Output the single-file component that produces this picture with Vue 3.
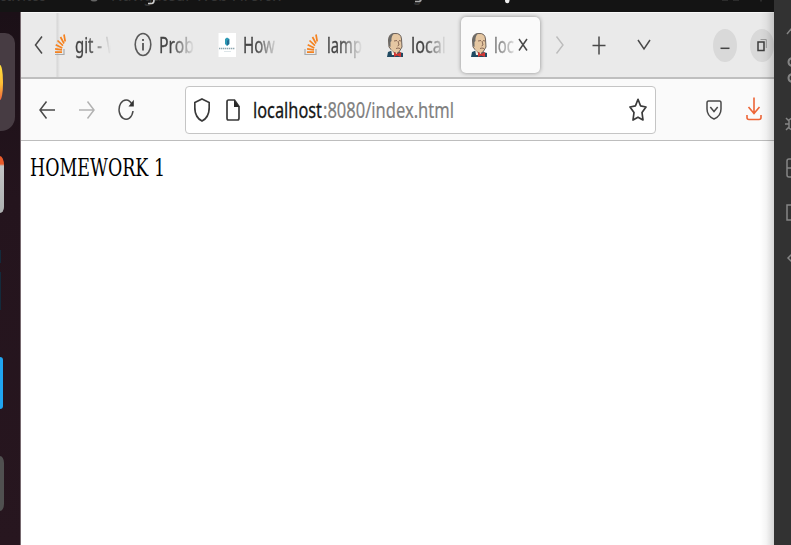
<script setup>
const tabs = [
  { icon: 'stack', title: 'git - W', width: 45, view: 36 },
  { icon: 'info', title: 'Prob', width: 35, view: 36 },
  { icon: 'page', title: 'How', width: 32, view: 36 },
  { icon: 'stack', title: 'lamp', width: 35, view: 36 },
  { icon: 'butler', title: 'local', width: 35, view: 36 },
  { icon: 'butler', title: 'loc', width: 20, view: 21, active: true },
]
</script>

<template>
  <div class="desktop">
    <header class="topbar">
      <svg width="774" height="12" viewBox="0 0 774 12">
        <g fill="#343434" font-size="20">
          <text x="-10" y="0.8" textLength="56" lengthAdjust="spacingAndGlyphs">Activités</text>
          <ellipse cx="94" cy="-2" rx="4" ry="3.600" fill="#666" />
          <text x="111" y="0.8" textLength="170" lengthAdjust="spacingAndGlyphs">Navigateur Web Firefox</text>
          <text x="395" y="-0.5" textLength="27" lengthAdjust="spacingAndGlyphs">aug</text>
        </g>
        <path d="M148 3.500H152Q154 3 154 0" stroke="#ccc" stroke-width="1.600" fill="none" />
        <path d="M415 1.500H419Q421 1 421 0" stroke="#aaa" stroke-width="1.600" fill="none" />
        <ellipse cx="507.300" cy="0" rx="2.300" ry="3.200" fill="#eee" />
        <path d="M722 0h6M733 0h6M761 0v1.500" stroke="#444" />
      </svg>
    </header>

    <aside class="dock">
      <div class="tile firefox"><span class="fox"></span></div>
      <div class="tile files"></div>
      <div class="tile dark small"></div>
      <div class="tile dark"></div>
      <div class="tile code"></div>
      <div class="tile grey"></div>
    </aside>

    <main class="browser">
      <div class="tabbar">
        <div class="scroll-left">
          <svg width="10" height="20" viewBox="0 0 10 20"><path d="M8 1.500L1.500 10L8 18.500" class="line" /></svg>
        </div>
        <div class="tabs">
          <div v-for="(tab, i) in tabs" :key="i" class="tab" :class="{ active: tab.active }">
            <svg v-if="tab.icon === 'stack'" class="fav" viewBox="0 0 16 24" width="16" height="24">
              <path d="M2 16V21.500H13V16" fill="none" stroke="#aaa" stroke-width="1.200" />
              <path d="M4 19.200H11M4.100 15.900L11 16.900M4.700 11.800L11.300 14.900M6.500 7.500L12 12.700M9.500 4L13 10.500M13 1.500L14.200 8.500" fill="none" stroke="#f5821f" stroke-width="1.700" />
            </svg>
            <svg v-else-if="tab.icon === 'info'" class="fav" viewBox="0 0 16 24" width="16" height="24">
              <ellipse cx="8" cy="11.500" rx="7.800" ry="11" fill="none" stroke="#5a5a5a" stroke-width="1.600" />
              <path d="M8 10V17.500M8 6V8" stroke="#555" stroke-width="1.800" />
            </svg>
            <svg v-else-if="tab.icon === 'page'" class="fav" viewBox="0 0 16 24" width="16" height="24">
              <path d="M-.5 0H17V24H-.5Z" fill="#fff" />
              <path d="M6 6L8 4.500L10.500 6V11L8 13L6 11Z" fill="#2c9ab5" />
              <path d="M8 8L10 6V11L8 12.500Z" fill="#276b91" />
              <path d="M0 15.500H16" stroke="#8fa7b0" stroke-width="1.500" stroke-dasharray="1.400 .6" />
              <path d="M5 18.500H12" stroke="#dde5e8" />
            </svg>
            <svg v-else class="fav" viewBox="0 0 16 24" width="16" height="24">
              <path d="M0 24L1 19L6 17L12 19L16 20V24Z" fill="#204a62" />
              <path d="M2 14L1.500 7Q2 0 8 .5Q14 0 14.500 6L15 14L12 19Q10 22 6 19Z" fill="#e5c7a2" stroke="#4c423d" stroke-width=".8" />
              <path d="M2 13L1.500 7Q2 1 7 .5Q4 3 4.500 8L3.500 9V14Z" fill="#6b6a68" />
              <path d="M7 8L10 7.500M12 7.500L14 8M11 8L12 12L10.500 13M9 15.500L11 15L13 15.500" stroke="#80604f" stroke-width=".9" fill="none" />
              <path d="M4 16L7 20L10 20V22H5Z" fill="#f4eee3" />
              <path d="M7 19L10 21L14 19V24L10 22.500L7 24Z" fill="#d33833" />
            </svg>
            <svg class="title" :width="tab.view" height="30">
              <text x="0" y="23" :textLength="tab.width" lengthAdjust="spacingAndGlyphs">{{ tab.title }}</text>
            </svg>
            <svg v-if="tab.active" class="close" width="10" height="14" viewBox="0 0 10 14"><path d="M1 1L9 12.500M9 1L1 12.500" class="line" /></svg>
          </div>
        </div>
        <div class="tab-actions">
          <svg width="10" height="20" viewBox="0 0 10 20"><path d="M1.500 1.500L8 10L1.500 18.500" fill="none" stroke="#bcbcbc" stroke-width="1.400" /></svg>
          <svg class="plus" width="14" height="20" viewBox="0 0 14 20"><path d="M.5 10.500H13.500M7 1.500V19.500" class="line" /></svg>
          <svg width="14" height="12" viewBox="0 0 14 12"><path d="M1 1L7 10L13 1" class="line" /></svg>
        </div>
        <div class="window-buttons">
          <span class="round"><svg width="10" height="12" viewBox="0 0 10 12"><path d="M.5 9.300H9.500" stroke="#444" stroke-width="1.500" /></svg></span>
          <span class="round"><svg width="10" height="14" viewBox="0 0 10 14"><path d="M3.500 1.500H9.300V10" fill="none" stroke="#999" /><path d="M1 4H7V12.500H1Z" fill="none" stroke="#3d3d3d" stroke-width="1.500" /></svg></span>
        </div>
      </div>

      <nav class="toolbar">
        <div class="nav-buttons">
          <svg width="16" height="20" viewBox="0 0 16 20"><path d="M16 10H1M7.500 1.500L1 10L7.500 18.500" class="line" /></svg>
          <svg width="16" height="20" viewBox="0 0 16 20"><path d="M0 10H15M8.500 1.500L15 10L8.500 18.500" fill="none" stroke="#b2b2b2" stroke-width="1.500" /></svg>
          <svg class="reload" width="16" height="22" viewBox="0 0 16 22"><path d="M13.800 5A7 9.700 0 1 0 15 12" class="line" /><path d="M15.800 .7V7.500H10.500Z" fill="#343434" /></svg>
        </div>
        <div class="address">
          <svg width="16" height="24" viewBox="0 0 16 24"><path d="M8 1L15.200 4.500V9.500C15.200 16 12 21 8 23C4 21 .8 16 .8 9.500V4.500Z" class="line heavy" /></svg>
          <svg class="doc" width="14" height="22" viewBox="0 0 14 22"><path d="M2.500 1H8.500L13 7.500V19Q13 21 11.500 21H2.500Q1 21 1 19V3Q1 1 2.500 1Z" class="line heavy" /><path d="M8 1L13.500 8H8Z" fill="#292929" /></svg>
          <svg class="url" width="202" height="32">
            <text x="0" y="24" textLength="69" lengthAdjust="spacingAndGlyphs" class="host">localhost</text>
            <text x="70" y="24" textLength="131" lengthAdjust="spacingAndGlyphs" class="path">:8080/index.html</text>
          </svg>
          <svg width="18" height="24" viewBox="0 0 18 24"><path d="M9 1.300L11.500 7.800L17 9L13 14.500L14 22L9 19.200L4 22L5 14.500L1 9L6.500 7.800Z" class="line heavy" stroke-linejoin="round" /></svg>
        </div>
        <div class="tools">
          <svg width="16" height="20" viewBox="0 0 16 20"><path d="M2.500 1H13.500Q15 1 15 3V9Q15 16 8 19Q1 16 1 9V3Q1 1 2.500 1Z" class="line" /><path d="M4.300 7L8 11.500L11.700 7" class="line" /></svg>
          <svg class="download" width="16" height="24" viewBox="0 0 16 24"><g fill="none" stroke="#ed6537" stroke-width="1.600"><path d="M8 .5V16M2.500 10L8 16.500L13.500 10" /><path d="M1 18V20.500Q1 22.500 3 22.500H13Q15 22.500 15 20.500V18" /></g></svg>
        </div>
      </nav>

      <section class="content">
        <svg width="140" height="32">
          <text x="0" y="26.300" textLength="135" lengthAdjust="spacingAndGlyphs">HOMEWORK 1</text>
        </svg>
      </section>
    </main>

    <aside class="rail">
      <svg width="17" height="300" viewBox="0 0 17 300" fill="none" stroke="#858585" stroke-width="1.500">
        <path d="M13 34L18 28" />
        <path d="M18 58Q14.500 59 14.500 62Q14.500 65 18 66M18 74Q14.500 75 14.500 78Q14.500 81 18 82" stroke-width="2" />
        <path d="M18 118L15 120V128L18 130M11 124H15M12 118L15 121M12 130L15 127" />
        <path d="M18 159H15Q13 159 13 161V175Q13 177 15 177H18M13 168H18" />
        <path d="M18 205H13V220H18" />
        <path d="M18 254L14 258L18 262" />
      </svg>
    </aside>
  </div>
</template>

<style>
body {
  background: #24141d;
}
</style>

<style scoped>
.desktop {
  display: grid;
  grid-template: 12px 533px / 21px 753px 17px;
  grid-template-areas: "top top rail" "dock main rail";
  width: 791px;
  height: 545px;
  overflow: hidden;
  font-family: "Noto Sans", "Open Sans", sans-serif;
}
svg {
  display: block;
  flex: none;
}
.line {
  fill: none;
  stroke: #494949;
  stroke-width: 1.5;
}
.heavy {
  stroke: #3a3a3a;
  stroke-width: 1.7;
}
.topbar {
  grid-area: top;
  background: #141414;
}
.dock {
  grid-area: dock;
  display: flex;
  flex-direction: column;
  align-items: flex-start;
  padding-top: 21px;
  box-sizing: border-box;
  background: linear-gradient(#1b1017, #24141d 35%, #27161f);
  border-right: 1px solid #76696f;
  overflow: hidden;
}
.tile {
  flex: none;
}
.firefox {
  display: flex;
  align-items: center;
  width: 15px;
  height: 98px;
  border-radius: 0 10px 14px 0;
  background: #473c43;
}
.fox {
  width: 3px;
  height: 35px;
  border-radius: 0 3px 3px 0 / 0 17px 17px 0;
  background: linear-gradient(#ffdf3d, #ffbd35 55%, #f0653d);
}
.files {
  width: 4px;
  height: 57px;
  margin-top: 25px;
  border-radius: 0 4px 4px 0 / 0 9px 6px 0;
  background: linear-gradient(#e95b2b 8px, #c3c5c5 10px, #aeb1b2);
}
.dark {
  width: 1px;
  height: 38px;
  margin-top: 9px;
  background: #132a3b;
}
.dark.small {
  height: 13px;
  margin-top: 37px;
}
.code {
  width: 3px;
  height: 52px;
  margin-top: 47px;
  border-radius: 0 3px 3px 0;
  background: #20a5f1;
}
.grey {
  width: 4px;
  height: 55px;
  margin-top: 47px;
  border-radius: 0 4px 4px 0 / 0 7px 7px 0;
  background: #505050;
}
.browser {
  grid-area: main;
  position: relative;
  display: flex;
  flex-direction: column;
  background: #fff;
  overflow: hidden;
}
.browser::after {
  content: "";
  position: absolute;
  inset: 0 0 0 auto;
  width: 14px;
  background: linear-gradient(90deg, transparent, rgba(0, 0, 0, 0.04) 45%, rgba(0, 0, 0, 0.16));
}
.tabbar {
  display: flex;
  align-items: center;
  height: 67px;
  box-sizing: border-box;
  border-top: 1px solid #f8f8f8;
  border-bottom: 2px solid #bfbfbf;
  background: #eaeaea;
}
.scroll-left {
  display: flex;
  justify-content: center;
  width: 35px;
}
.tabs {
  display: flex;
  align-items: center;
  width: 490px;
  height: 64px;
  margin-left: -1px;
  padding-right: 1px;
  box-sizing: content-box;
  overflow: hidden;
  background: linear-gradient(90deg, #eaeaea 1px, #d6d6d6 2px, #eaeaea 5px);
}
.tab {
  display: flex;
  align-items: center;
  flex: none;
  width: 84px;
  height: 56px;
  padding-left: 10px;
  box-sizing: border-box;
}
.tab:first-child {
  margin-left: -14px;
}
.tab.active {
  width: 79px;
  border-radius: 5px;
  background: #fafafa;
  box-shadow: 0 0 4px rgba(0, 0, 0, 0.4);
}
.fav {
  overflow: visible;
}
.title {
  margin-left: 8px;
  overflow: hidden;
  font-size: 21.5px;
  fill: #444;
  stroke: #444;
  stroke-width: 0.3px;
  mask-image: linear-gradient(90deg, #000 35%, transparent);
}
.active .title {
  margin-left: 7px;
  mask-image: linear-gradient(90deg, rgba(0, 0, 0, 0.75), rgba(0, 0, 0, 0.15));
}
.close {
  margin-left: 3px;
}
.tab-actions {
  display: flex;
  align-items: center;
  gap: 37px;
  margin-left: 9px;
}
.plus {
  margin: 0 -7px 0 -10px;
}
.tab-actions svg:last-child {
  margin-left: 1px;
}
.window-buttons {
  display: flex;
  gap: 13px;
  margin-left: auto;
}
.round {
  display: flex;
  align-items: center;
  justify-content: center;
  width: 24px;
  height: 33px;
  border-radius: 50%;
  background: #d9d9d9;
}
.toolbar {
  display: flex;
  align-items: center;
  height: 62px;
  box-sizing: border-box;
  padding: 0 12px 0 18px;
  border-bottom: 1px solid #bdbdbd;
  background: #fafafa;
}
.nav-buttons {
  display: flex;
  align-items: center;
  gap: 24px;
  width: 146px;
}
.reload {
  margin-left: -1px;
}
.address {
  display: flex;
  align-items: center;
  width: 471px;
  height: 48px;
  box-sizing: border-box;
  padding: 0 8px;
  border: 1px solid #c5c5c5;
  border-radius: 4px;
  background: #fff;
}
.doc {
  margin-left: 16px;
}
.url {
  margin-left: 13px;
  margin-right: auto;
  font-size: 22px;
}
.host {
  fill: #161616;
  stroke: #161616;
  stroke-width: 0.3px;
}
.path {
  fill: #808080;
  stroke: #808080;
  stroke-width: 0.2px;
}
.tools {
  display: flex;
  align-items: center;
  gap: 24px;
  margin-left: auto;
}
.download {
  margin-top: -2px;
}
.content {
  flex: 1;
  padding: 9px;
  font-family: "DejaVu Serif", serif;
  font-size: 24.5px;
}
.rail {
  grid-area: rail;
  background: #323232;
}
</style>
